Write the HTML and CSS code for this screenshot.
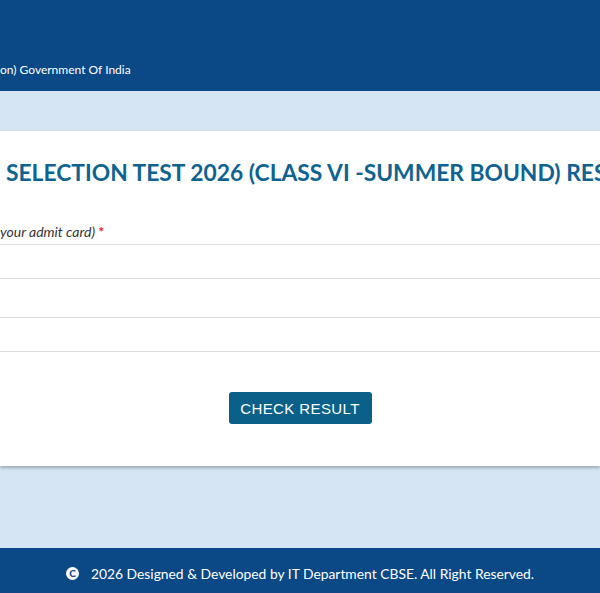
FILE: index.html
```html
<!DOCTYPE html>
<html>
<head>
<meta charset="utf-8">
<link rel="stylesheet" href="styles.css">
</head>
<body>
<header class="top">
  <div class="gov">on) Government Of India</div>
</header>
<div class="band"></div>
<main class="card">
  <h1 class="title">SELECTION TEST 2026 (CLASS VI -SUMMER BOUND) RES</h1>
  <label class="label">your admit card) <span class="req">*</span></label>
  <div class="field"></div>
  <div class="field field2"></div>
  <div class="actions">
    <button class="btn">CHECK RESULT</button>
  </div>
</main>
<div class="band band2"></div>
<footer class="foot">
  <span class="copy">C</span>
  <span>2026 Designed &amp; Developed by IT Department CBSE. All Right Reserved.</span>
</footer>
</body>
</html>
```
FILE: styles.css
```css
html, body {
  margin: 0;
  padding: 0;
  overflow: hidden;
  font-family: Lato, "Open Sans", sans-serif;
  background: #d5e5f4;
}
.top {
  height: 91px;
  background: #0b4886;
  display: flex;
  align-items: flex-end;
}
.gov {
  color: #ffffff;
  font-size: 12px;
  line-height: 14px;
  padding-bottom: 14px;
  white-space: nowrap;
}
.band {
  height: 40px;
  background: #d5e5f4;
}
.card {
  background: #ffffff;
  height: 335px;
  box-shadow: 0 2px 3px rgba(0, 0, 0, 0.25);
  display: flex;
  flex-direction: column;
  overflow: hidden;
  position: relative;
  z-index: 1;
}
.title {
  margin: 28px 0 0 6px;
  font-size: 22.8px;
  line-height: 26px;
  font-weight: bold;
  color: #0f6391;
  white-space: nowrap;
}
.label {
  margin-top: 38px;
  font-size: 14px;
  line-height: 17px;
  font-style: italic;
  color: #333333;
  white-space: nowrap;
}
.req {
  color: #e3173e;
  font-style: normal;
  font-weight: bold;
}
.field {
  margin-top: 4px;
  height: 33px;
  border-top: 1px solid #dddddd;
  border-bottom: 1px solid #dddddd;
}
.field2 {
  margin-top: 38px;
}
.actions {
  display: flex;
  justify-content: center;
  margin-top: 40px;
}
.btn {
  width: 143px;
  height: 32px;
  background: #0a6089;
  color: #ffffff;
  border: none;
  border-radius: 3px;
  font-family: "Liberation Sans", Arial, sans-serif;
  font-size: 15px;
  letter-spacing: 0.4px;
  padding: 0;
}
.band2 {
  height: 82px;
}
.foot {
  height: 45px;
  background: #0b4886;
  color: #ffffff;
  font-size: 13.85px;
  display: flex;
  align-items: center;
  justify-content: center;
  gap: 12px;
  padding-top: 5px;
  box-sizing: border-box;
  white-space: nowrap;
}
.copy {
  width: 13px;
  height: 13px;
  border-radius: 50%;
  background: #ffffff;
  color: #0b4886;
  font-size: 10px;
  font-weight: 900;
  line-height: 13px;
  text-align: center;
  display: inline-block;
}
```
